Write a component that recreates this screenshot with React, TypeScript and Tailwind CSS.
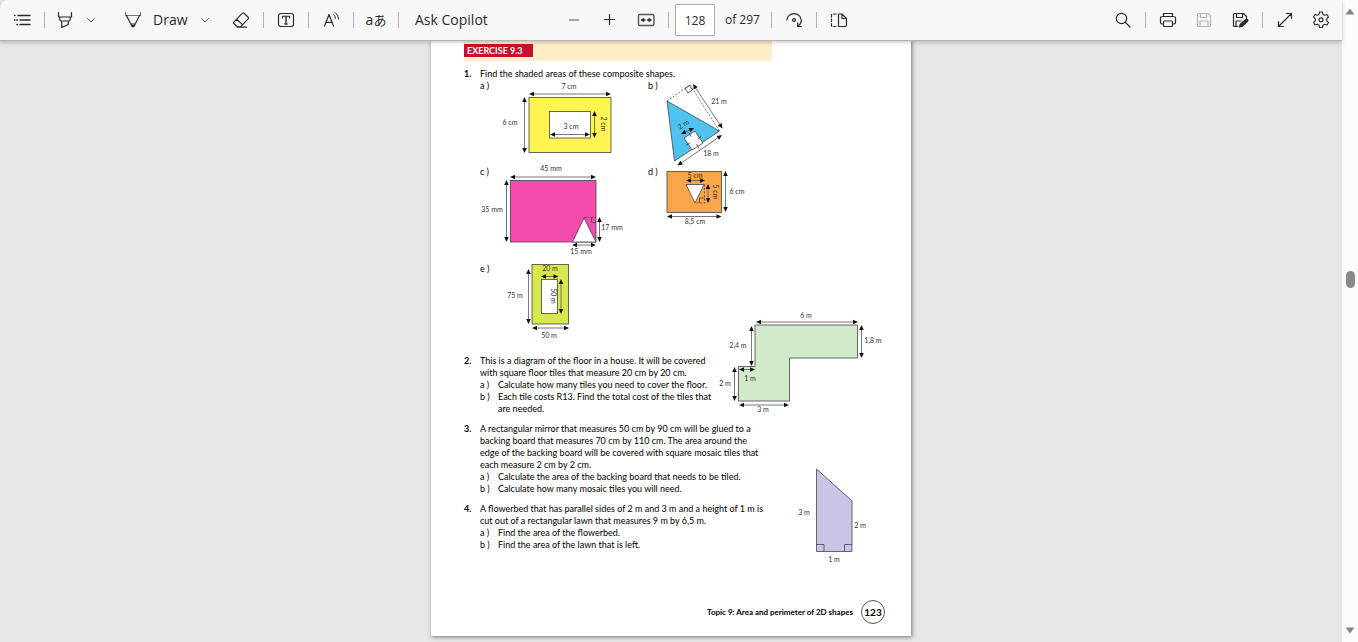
import type { ReactNode } from "react";

type IconProps = { children: ReactNode; size?: number; className?: string };

function Icon({ children, size = 20, className = "" }: IconProps) {
    return (
        <svg
            width={size}
            height={20}
            viewBox={`0 0 ${size} 20`}
            fill="none"
            stroke="currentColor"
            strokeWidth="1.2"
            strokeLinecap="round"
            strokeLinejoin="round"
            className={`block overflow-visible ${className}`}
            aria-hidden="true"
        >
            {children}
        </svg>
    );
}

function ToolButton({ label, children, className = "" }: { label: string; children: ReactNode; className?: string }) {
    return (
        <button type="button" aria-label={label} className={`shrink-0 ${className}`}>
            {children}
        </button>
    );
}

function Separator({ className = "mx-3" }: { className?: string }) {
    return <span className={`h-4 w-px shrink-0 bg-[#b4b4b4] ${className}`} />;
}

function Chevron() {
    return (
        <Icon size={12} className="text-[#555]">
            <path d="M2.5 8.5 6 12l3.5-3.5" strokeWidth="1" />
        </Icon>
    );
}

function Toolbar() {
    return (
        <header className="relative z-10 flex h-10 shrink-0 items-center rounded-tl-lg bg-[#f7f7f7] pl-3 pr-[11px] text-[#2b2b2b] shadow-[0_1px_0_#b5b5b5,0_2px_4px_rgba(0,0,0,0.25)]">
            <ToolButton label="Contents">
                <Icon>
                    <path d="M6 5.5h12M8 10h10M8 14.5h10" strokeWidth="1.3" />
                    <path d="M2.7 5.5h.2M2.7 10h.2M5 14.5h.2M5 10h.2" strokeWidth="1.7" />
                </Icon>
            </ToolButton>
            <Separator />
            <ToolButton label="Highlight">
                <Icon size={16}>
                    <path d="M1.5 2.5V7h13V2.5M2.8 7v2.5q0 1.5 1.5 1.5h7.4q1.5 0 1.5-1.5V7M4.7 11v6.5l6.6-3V11" />
                </Icon>
            </ToolButton>
            <ToolButton label="Highlight colours" className="ml-3">
                <Chevron />
            </ToolButton>
            <button type="button" className="ml-[26px] flex w-[62px] shrink-0 items-center gap-2.5">
                <Icon>
                    <path d="M2.5 2.5v3h15v-3" stroke="#777" />
                    <path d="m3.5 5.5 5.5 11h2l5.5-11M7.8 14h4.4" />
                    <path d="M9.2 15.5h1.6l-.8 1.5z" fill="currentColor" />
                </Icon>
                <span className="text-[14px] leading-5">Draw</span>
            </button>
            <ToolButton label="Draw options" className="ml-[14px]">
                <Chevron />
            </ToolButton>
            <ToolButton label="Erase" className="ml-5">
                <Icon>
                    <path d="M11.4 3.2q.8-.8 1.6 0l4.2 4q.8.8 0 1.6l-7.7 8H6.2l-3.4-3.3q-.7-.7 0-1.4zM5.5 9.3l6 5.3M6.5 17.2h9" />
                </Icon>
            </ToolButton>
            <Separator />
            <ToolButton label="Add text">
                <Icon>
                    <rect x="2.5" y="3.5" width="15" height="13" rx="2.5" />
                    <path d="M6.5 8V6.3h7V8M8.5 14h3" strokeWidth="1.1" />
                    <path d="M10 6.5V14" strokeWidth="1.4" />
                </Icon>
            </ToolButton>
            <Separator />
            <ToolButton label="Read aloud">
                <Icon>
                    <path d="M3.5 16 8 4.5 12.5 16M5 12.3h6" />
                    <path d="M12.5 4.5q2 1.5 2 4M14.5 2.7q3 2.3 3 6.3" strokeWidth="1" />
                </Icon>
            </ToolButton>
            <Separator />
            <ToolButton label="Translate" className="w-5">
                <span className="flex justify-center whitespace-nowrap font-['Open_Sans','Noto_Sans_CJK_JP',sans-serif] text-[14px] leading-5">
                    a<span className="text-[13px]">あ</span>
                </span>
            </ToolButton>
            <Separator />
            <button type="button" className="w-[76px] shrink-0 whitespace-nowrap pl-1 text-left text-[14px] leading-5">
                Ask Copilot
            </button>

            <div className="ml-[77px] flex shrink-0 items-center">
                <div className="flex gap-4">
                    <ToolButton label="Zoom out">
                        <Icon>
                            <path d="M5.5 10h9" stroke="#8a8a8a" strokeWidth="1.6" />
                        </Icon>
                    </ToolButton>
                    <ToolButton label="Zoom in">
                        <Icon>
                            <path d="M4.5 9.5h10M9.5 4.5v10" />
                        </Icon>
                    </ToolButton>
                    <ToolButton label="Fit to width">
                        <Icon>
                            <rect x="2.5" y="4.5" width="15.5" height="11" rx="1.5" stroke="#555" strokeWidth="1.4" />
                            <path d="M5.5 10H9M11.5 10H15" strokeWidth="1.4" />
                            <path d="M7.3 8.5 5.5 10l1.8 1.5zM13.2 8.5 15 10l-1.8 1.5z" strokeWidth="0.8" fill="currentColor" />
                        </Icon>
                    </ToolButton>
                </div>
                <Separator className="ml-3 mr-1.5" />
                <input
                    type="text"
                    aria-label="Page number"
                    defaultValue="128"
                    className="h-8 w-10 rounded-xs border border-[#aaa] bg-white text-center text-[12px]"
                />
                <span className="ml-2.5 w-[34px] whitespace-nowrap text-[12px] leading-5">of 297</span>
                <Separator />
                <ToolButton label="Rotate">
                    <Icon>
                        <path d="M2.8 10A7.3 7.3 0 0 1 17.3 10q0 3.8-3.3 6M13.7 12.8v3.7h3.8" />
                        <circle cx="10" cy="10" r="1.4" />
                    </Icon>
                </ToolButton>
                <Separator />
                <ToolButton label="Page view">
                    <Icon>
                        <path d="M9.5 4v12.5H16q1.5 0 1.5-1.5V8.5L13 4zM13 4v4.5h4.5" />
                        <path d="M7 4H3.5q-1 0-1 1v10.5q0 1 1 1H7" strokeDasharray="2.5 2" />
                    </Icon>
                </ToolButton>
            </div>

            <div className="ml-auto flex shrink-0 items-center">
                <ToolButton label="Find">
                    <Icon>
                        <circle cx="8.5" cy="8.5" r="5.2" />
                        <path d="m12.5 12.5 4.5 4.5" />
                    </Icon>
                </ToolButton>
                <Separator />
                <div className="flex gap-4">
                    <ToolButton label="Print">
                        <Icon>
                            <path d="M5.5 6.5v-3h9v3M5.5 14H4q-1.5 0-1.5-1.5v-4q0-2 2-2h11q2 0 2 2v4q0 1.5-1.5 1.5h-1.5" />
                            <rect x="5.5" y="11" width="9" height="5.5" rx="1" />
                        </Icon>
                    </ToolButton>
                    <ToolButton label="Save" className="text-[#b5b5b5]">
                        <Icon>
                            <path d="M4.5 3.5H14L16.5 6v9.5q0 1-1 1h-11q-1 0-1-1v-11q0-1 1-1zM6.5 3.5v4h6v-4M6 16.5V11h8v5.5" />
                        </Icon>
                    </ToolButton>
                    <ToolButton label="Save as">
                        <Icon>
                            <path d="M8 16.5H4.5q-1 0-1-1v-11q0-1 1-1h9l3 3v2M6.5 3.5v4h6v-4M6 16.5V11h5" />
                            <path d="m9.5 17 .8-2.8 5.5-4.7q1-.6 1.8.2.7.9 0 1.7l-5.4 5z" fill="currentColor" />
                        </Icon>
                    </ToolButton>
                </div>
                <Separator />
                <div className="flex gap-4">
                    <ToolButton label="Full screen">
                        <Icon>
                            <path d="m3.5 16.5 13-13M11.5 3.5h5v5M3.5 11.5v5h5" />
                        </Icon>
                    </ToolButton>
                    <ToolButton label="Settings">
                        <Icon>
                            <path
                                d="M8.6 2h2.8l.6 2.4 1.5.8 2.4-.7L17.4 7l-1.7 1.8v2l1.8 1.7L16 15l-2.4-.7-1.6.9-.6 2.3H8.6L8 15.2l-1.6-.9L4 15l-1.5-2.5 1.8-1.7v-2L2.5 7 4 4.5l2.4.7L8 4.4z"
                                strokeWidth="1.1"
                            />
                            <circle cx="10" cy="9.8" r="2" />
                        </Icon>
                    </ToolButton>
                </div>
            </div>
        </header>
    );
}

/* ---------- diagrams ---------- */

type ArrowProps = { x1: number; y1: number; x2: number; y2: number };

// dimension line with a head on both ends
function Arrow({ x1, y1, x2, y2 }: ArrowProps) {
    const len = Math.hypot(x2 - x1, y2 - y1);
    const ux = (x2 - x1) / len;
    const uy = (y2 - y1) / len;
    const head = (x: number, y: number, dir: number) => {
        const bx = x + ux * 5 * dir;
        const by = y + uy * 5 * dir;
        return `${x},${y} ${bx - uy * 2.3},${by + ux * 2.3} ${bx + uy * 2.3},${by - ux * 2.3}`;
    };
    return (
        <g>
            <line x1={x1 + ux * 3} y1={y1 + uy * 3} x2={x2 - ux * 3} y2={y2 - uy * 3} stroke="#555" strokeWidth="0.8" />
            <polygon points={head(x1, y1, 1)} fill="#111" />
            <polygon points={head(x2, y2, -1)} fill="#111" />
        </g>
    );
}

type LabelProps = { x: number; y: number; rotate?: number; children: ReactNode };

function Label({ x, y, rotate = 0, children }: LabelProps) {
    return (
        <text
            x={x}
            y={y}
            textAnchor="middle"
            dominantBaseline="central"
            transform={rotate ? `rotate(${rotate} ${x} ${y})` : undefined}
            className="fill-[#333] text-[7px]"
        >
            {children}
        </text>
    );
}

type FigureProps = { x: number; y: number; w: number; h: number; title: string; className?: string; children: ReactNode };

function Figure({ x, y, w, h, title, className = "", children }: FigureProps) {
    return (
        <svg
            width={w}
            height={h}
            viewBox={`${x} ${y} ${w} ${h}`}
            role="img"
            aria-label={title}
            className={`block shrink-0 overflow-visible ${className}`}
        >
            {children}
        </svg>
    );
}

const outline = { stroke: "#444", strokeWidth: 0.8 };
const dashed = { stroke: "#333", strokeWidth: 0.7, strokeDasharray: "2 1.5", fill: "none" };

function YellowRectangle() {
    return (
        <Figure x={498} y={80} w={150} h={86} title="Rectangle with a rectangular hole">
            <rect x="529" y="97.5" width="82" height="55" fill="#fff450" {...outline} />
            <rect x="549.5" y="111.5" width="41" height="26.5" fill="#fff" {...outline} />
            <Arrow x1={529} y1={94} x2={611} y2={94} />
            <Arrow x1={524.5} y1={97} x2={524.5} y2={153} />
            <Arrow x1={550} y1={134.5} x2={590} y2={134.5} />
            <Arrow x1={594.5} y1={111} x2={594.5} y2={138} />
            <Label x={569} y={86}>7 cm</Label>
            <Label x={510} y={122}>6 cm</Label>
            <Label x={571} y={126}>3 cm</Label>
            <Label x={604} y={124} rotate={90}>2 cm</Label>
        </Figure>
    );
}

function BlueTriangle() {
    return (
        <Figure x={666} y={80} w={100} h={86} title="Triangle with a square hole">
            <polygon points="667,101 719.5,131 674.5,161" fill="#4fc3f0" {...outline} />
            <polygon points="684,138 695,131 703,143 692,150" fill="#fff" {...outline} />
            <path d="M667 101 690 85 719.5 131" {...dashed} />
            <path d="m685 88.500 3 4.500 4.500-3-3-4.500z" fill="none" stroke="#333" strokeWidth="0.8" />
            <path
                d="m686 145.500 4-2.500M697.500 139l3.500-2.500M689 133l2 3.500M696.500 144l2.500 4.500"
                stroke="#333"
                strokeWidth="0.8"
            />
            <Arrow x1={693} y1={84} x2={722.5} y2={128.5} />
            <Arrow x1={677.5} y1={165.5} x2={722} y2={135} />
            <Arrow x1={681} y1={134} x2={694} y2={128} />
            <Label x={719} y={101}>21 m</Label>
            <Label x={711} y={153}>18 m</Label>
            <Label x={683} y={124} rotate={-33}>2 m</Label>
        </Figure>
    );
}

function PinkRectangle() {
    return (
        <Figure x={498} y={166} w={150} h={97} title="Rectangle with a triangle cut out of its base">
            <rect x="510.5" y="180.5" width="85.5" height="61.5" fill="#f34bae" {...outline} />
            <polygon points="572.5,242 584,218 596,242" fill="#fff" {...outline} />
            <path d="M584 217.5h12" {...dashed} />
            <path d="M591.5 217.5v5h4.5" fill="none" {...outline} />
            <Arrow x1={510} y1={177} x2={596} y2={177} />
            <Arrow x1={506.5} y1={180} x2={506.5} y2={242} />
            <Arrow x1={599.5} y1={217} x2={599.5} y2={242} />
            <Arrow x1={572} y1={245} x2={596} y2={245} />
            <Label x={551} y={168}>45 mm</Label>
            <Label x={492} y={209}>35 mm</Label>
            <Label x={612} y={227}>17 mm</Label>
            <Label x={581} y={251}>15 mm</Label>
        </Figure>
    );
}

function OrangeRectangle() {
    return (
        <Figure x={666} y={166} w={100} h={97} title="Rectangle with a triangular hole">
            <rect x="667" y="171.5" width="54.5" height="41" fill="#f9a54a" {...outline} />
            <polygon points="686,184.5 704,184.5 695,203" fill="#fff" {...outline} />
            <path d="M704.5 184.5V203H695" {...dashed} />
            <path d="M699.5 203v-5h5" fill="none" {...outline} />
            <Arrow x1={686} y1={180.5} x2={705} y2={180.5} />
            <Arrow x1={708} y1={184} x2={708} y2={203} />
            <Arrow x1={725.5} y1={171} x2={725.5} y2={212} />
            <Arrow x1={667} y1={216.5} x2={721.5} y2={216.5} />
            <Label x={695} y={175}>5 cm</Label>
            <Label x={716} y={192} rotate={90}>5 cm</Label>
            <Label x={737} y={191}>6 cm</Label>
            <Label x={695} y={221}>8,5 cm</Label>
        </Figure>
    );
}

function GreenFrame() {
    return (
        <Figure x={498} y={263} w={150} h={84} title="Tall rectangle with a rectangular hole">
            <rect x="532" y="264.5" width="36.5" height="59.5" fill="#d9e74e" {...outline} />
            <rect x="541.5" y="279.5" width="16" height="34" fill="#fff" {...outline} />
            <Arrow x1={528.5} y1={269} x2={528.5} y2={324} />
            <Arrow x1={532} y1={328} x2={569} y2={328} />
            <Arrow x1={541} y1={276.5} x2={558.5} y2={276.5} />
            <Arrow x1={561} y1={279} x2={561} y2={314} />
            <Label x={550} y={268}>20 m</Label>
            <Label x={554} y={296} rotate={90}>50 m</Label>
            <Label x={515} y={295}>75 m</Label>
            <Label x={549} y={335}>50 m</Label>
        </Figure>
    );
}

function FloorPlan() {
    return (
        <Figure x={719} y={311} w={166} h={104} title="Floor plan" className="-mt-11">
            <polygon
                points="755,325 857.5,325 857.5,358 789.5,358 789.5,401 738.5,401 738.5,366.5 755,366.5"
                fill="#d1ebca"
                {...outline}
            />
            <Arrow x1={756} y1={322} x2={858} y2={322} />
            <Arrow x1={751.5} y1={326} x2={751.5} y2={366} />
            <Arrow x1={734.5} y1={367} x2={734.5} y2={401} />
            <Arrow x1={739} y1={369.5} x2={755} y2={369.5} />
            <Arrow x1={739} y1={405} x2={789} y2={405} />
            <Arrow x1={861.5} y1={325} x2={861.5} y2={358} />
            <Label x={806} y={315}>6 m</Label>
            <Label x={738} y={345}>2,4 m</Label>
            <Label x={725} y={383}>2 m</Label>
            <Label x={750} y={378}>1 m</Label>
            <Label x={763} y={409}>3 m</Label>
            <Label x={873} y={340}>1,8 m</Label>
        </Figure>
    );
}

function Flowerbed() {
    return (
        <Figure x={798} y={467} w={70} h={100} title="Flowerbed" className="-mt-9 mr-[17px]">
            <polygon points="816.5,469 852,501 852,551.5 816.5,551.5" fill="#cbc4e6" {...outline} />
            <path d="M816.5 544.5h7.5v7M844.5 551.5v-7h7.5" fill="none" {...outline} />
            <Label x={804} y={512}>3 m</Label>
            <Label x={860} y={525}>2 m</Label>
            <Label x={834} y={559}>1 m</Label>
        </Figure>
    );
}

/* ---------- page content ---------- */

const shapes = [
    { letter: "a", figure: <YellowRectangle /> },
    { letter: "b", figure: <BlueTriangle /> },
    { letter: "c", figure: <PinkRectangle /> },
    { letter: "d", figure: <OrangeRectangle /> },
    { letter: "e", figure: <GreenFrame /> },
];

type QuestionProps = {
    number: number;
    lines: string[];
    parts?: string[][];
    figure?: ReactNode;
    children?: ReactNode;
};

function Question({ number, lines, parts = [], figure, children }: QuestionProps) {
    return (
        <li className="flex items-start whitespace-nowrap">
            <span className="w-4 shrink-0 font-bold">{number}.</span>
            <div>
                {lines.map((line) => (
                    <p key={line}>{line}</p>
                ))}
                {parts.map((part, i) => (
                    <div key={part[0]} className="flex">
                        <span className="w-[18px] shrink-0">{"ab"[i]} )</span>
                        <div>
                            {part.map((line) => (
                                <p key={line}>{line}</p>
                            ))}
                        </div>
                    </div>
                ))}
                {children}
            </div>
            {figure && <div className="ml-auto">{figure}</div>}
        </li>
    );
}

function BookPage() {
    return (
        <article className="mx-auto w-[480px] bg-white px-[33px] pb-3 font-[Lato,sans-serif] text-[9px] leading-3 text-black shadow-[1px_1px_4px_rgba(0,0,0,0.5)]">
            <div className="flex h-[21px] w-[308px] items-start bg-[#fbeec8] pt-1">
                <h1 className="w-[69px] bg-[#c8102e] pl-[3px] text-[9px] font-bold leading-[13px] text-white">EXERCISE 9.3</h1>
            </div>

            <ol className="mr-[-7px] flex flex-col gap-2 pt-[7px]">
                <Question number={1} lines={["Find the shaded areas of these composite shapes."]}>
                    <div className="grid grid-cols-[168px_168px]">
                        {shapes.map((shape) => (
                            <div key={shape.letter} className="flex">
                                <span className="w-[18px] shrink-0">{shape.letter} )</span>
                                {shape.figure}
                            </div>
                        ))}
                    </div>
                </Question>
                <Question
                    number={2}
                    lines={[
                        "This is a diagram of the floor in a house. It will be covered",
                        "with square floor tiles that measure 20 cm by 20 cm.",
                    ]}
                    parts={[
                        ["Calculate how many tiles you need to cover the floor."],
                        ["Each tile costs R13. Find the total cost of the tiles that", "are needed."],
                    ]}
                    figure={<FloorPlan />}
                />
                <Question
                    number={3}
                    lines={[
                        "A rectangular mirror that measures 50 cm by 90 cm will be glued to a",
                        "backing board that measures 70 cm by 110 cm. The area around the",
                        "edge of the backing board will be covered with square mosaic tiles that",
                        "each measure 2 cm by 2 cm.",
                    ]}
                    parts={[
                        ["Calculate the area of the backing board that needs to be tiled."],
                        ["Calculate how many mosaic tiles you will need."],
                    ]}
                />
                <Question
                    number={4}
                    lines={[
                        "A flowerbed that has parallel sides of 2 m and 3 m and a height of 1 m is",
                        "cut out of a rectangular lawn that measures 9 m by 6,5 m.",
                    ]}
                    parts={[["Find the area of the flowerbed."], ["Find the area of the lawn that is left."]]}
                    figure={<Flowerbed />}
                />
            </ol>

            <footer className="mr-[-7px] mt-[33px] flex items-center justify-end gap-2 text-[8px] font-bold">
                <span>Topic 9: Area and perimeter of 2D shapes</span>
                <span className="flex size-6 items-center justify-center rounded-full border border-[#555] text-[10px]">
                    123
                </span>
            </footer>
        </article>
    );
}

function ScrollBar() {
    return (
        <div className="flex w-4 shrink-0 flex-col items-center justify-between bg-[#fcfcfc] py-2 text-[#858585]">
            <svg width="10" height="7" viewBox="0 0 10 7" aria-hidden="true">
                <path d="M5 .5 9.5 6.5H.5z" fill="currentColor" />
            </svg>
            <span className="mb-[84px] h-[17px] w-[9px] rounded-full bg-[#8a8a8a]" />
            <svg width="10" height="7" viewBox="0 0 10 7" aria-hidden="true">
                <path d="M5 6.5 9.5.5H.5z" fill="currentColor" />
            </svg>
        </div>
    );
}

export default function App() {
    return (
        <div className="flex h-screen bg-[#e6e6e6] font-['Open_Sans',sans-serif]">
            <div className="flex min-w-0 flex-1 flex-col">
                <Toolbar />
                <main className="min-h-0 flex-1 overflow-hidden">
                    <BookPage />
                </main>
            </div>
            <ScrollBar />
        </div>
    );
}
